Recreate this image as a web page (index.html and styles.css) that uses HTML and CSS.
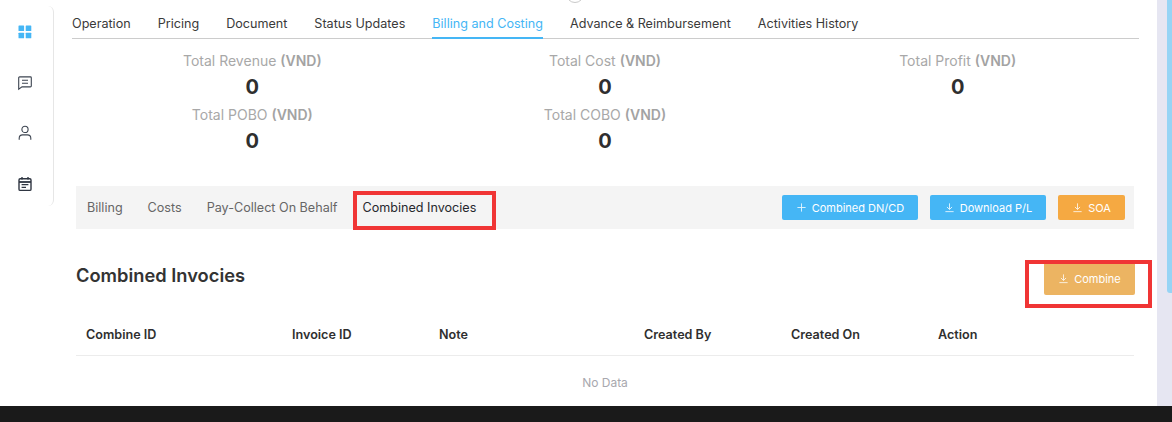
FILE: index.html
```html
<!DOCTYPE html>
<html lang="en">
<head>
<meta charset="utf-8">
<title>Billing and Costing</title>
<link rel="stylesheet" href="styles.css">
</head>
<body>
<div class="window">
  <div class="app">
    <aside class="sidebar">
      <svg class="side-icon" width="16" height="16" viewBox="0 0 16 16"><g fill="#45b6f5"><rect x="1.5" y="1.5" width="5.6" height="5.6" rx=".6"/><rect x="8.7" y="1.5" width="5.6" height="5.6" rx=".6"/><rect x="1.5" y="8.7" width="5.6" height="5.6" rx=".6"/><rect x="8.7" y="8.7" width="5.6" height="5.6" rx=".6"/></g></svg>
      <svg class="side-icon" width="16" height="16" viewBox="0 0 16 16" fill="none" stroke="#3c4450" stroke-width="1.1"><path d="M2.6 1.9h10.8a.9.9 0 0 1 .9.9v8.2a.9.9 0 0 1-.9.9H5l-3.3 2.2V2.8a.9.9 0 0 1 .9-.9z"/><path d="M5 5.3h6M5 8.3h6"/></svg>
      <svg class="side-icon" width="16" height="16" viewBox="0 0 16 16" fill="none" stroke="#3c4450" stroke-width="1.1"><circle cx="8" cy="4.4" r="3.1"/><path d="M2.2 14.8v-1.6c0-2 1.6-3.3 3.4-3.3h4.8c1.8 0 3.4 1.3 3.4 3.3v1.6"/></svg>
      <svg class="side-icon" width="16" height="16" viewBox="0 0 16 16" fill="none" stroke="#2f3642" stroke-width="1.4"><rect x="2" y="2.8" width="12" height="11.6" rx="1.2"/><path d="M2 6h12" stroke-width="1.8"/><path d="M5 1v2.6M11 1v2.6" /><path d="M4.6 8.7h6.8M4.6 11.3h4.4" stroke-width="1.2"/></svg>
    </aside>
    <main class="content">
      <span class="top-arc"></span>
      <nav class="tabs">
        <a class="tab">Operation</a>
        <a class="tab">Pricing</a>
        <a class="tab">Document</a>
        <a class="tab">Status Updates</a>
        <a class="tab tab-active">Billing and Costing</a>
        <a class="tab">Advance &amp; Reimbursement</a>
        <a class="tab">Activities History</a>
      </nav>
      <div class="body">
        <section class="stats">
          <div class="stat"><div class="stat-label">Total Revenue <b>(VND)</b></div><div class="stat-value">0</div></div>
          <div class="stat"><div class="stat-label">Total Cost <b>(VND)</b></div><div class="stat-value">0</div></div>
          <div class="stat"><div class="stat-label">Total Profit <b>(VND)</b></div><div class="stat-value">0</div></div>
          <div class="stat"><div class="stat-label">Total POBO <b>(VND)</b></div><div class="stat-value">0</div></div>
          <div class="stat"><div class="stat-label">Total COBO <b>(VND)</b></div><div class="stat-value">0</div></div>
        </section>
        <section class="subbar">
          <div class="subtabs">
            <a class="subtab">Billing</a>
            <a class="subtab">Costs</a>
            <a class="subtab">Pay-Collect On Behalf</a>
            <a class="subtab subtab-active">Combined Invocies</a>
          </div>
          <div class="actions">
            <button class="btn btn-blue btn-dn"><svg class="btn-icon" viewBox="0 0 12 12" fill="none" stroke="currentColor" stroke-width="1"><path d="M6 1.5v9M1.5 6h9"/></svg>Combined DN/CD</button>
            <button class="btn btn-blue btn-pl"><svg class="btn-icon" viewBox="0 0 12 12" fill="none" stroke="currentColor" stroke-width="1"><path d="M6 1.5v6.5M3.2 5.4L6 8.2l2.8-2.8M1.5 10.5h9"/></svg>Download P/L</button>
            <button class="btn btn-orange btn-soa"><svg class="btn-icon" viewBox="0 0 12 12" fill="none" stroke="currentColor" stroke-width="1"><path d="M6 1.5v6.5M3.2 5.4L6 8.2l2.8-2.8M1.5 10.5h9"/></svg>SOA</button>
          </div>
        </section>
        <section class="heading-row">
          <h2 class="heading">Combined Invocies</h2>
          <button class="btn btn-combine"><svg class="btn-icon" viewBox="0 0 12 12" fill="none" stroke="currentColor" stroke-width="1"><path d="M6 1.5v6.5M3.2 5.4L6 8.2l2.8-2.8M1.5 10.5h9"/></svg>Combine</button>
        </section>
        <section class="table">
          <div class="thead">
            <div>Combine ID</div><div>Invoice ID</div><div>Note</div><div>Created By</div><div>Created On</div><div>Action</div>
          </div>
          <div class="empty">No Data</div>
        </section>
      </div>
      <span class="mark mark-tab"></span>
      <span class="mark mark-btn"></span>
    </main>
    <div class="scrollbar"><div class="thumb"></div></div>
  </div>
  <div class="dock"></div>
</div>
</body>
</html>
```
FILE: styles.css
```css
* { box-sizing: border-box; }
html, body { margin: 0; height: 100%; overflow: hidden; background: #fff; }
body { font-family: Inter, "Liberation Sans", sans-serif; color: #333; }
.window { width: 1172px; height: 422px; display: flex; flex-direction: column; }
.app { height: 406px; display: flex; }
.dock { height: 16px; background: #1a1a1a; }

.sidebar {
  width: 54px; height: 200px; margin-top: 6px;
  border-right: 1px solid #e6e6e6; border-bottom-right-radius: 6px; border-top-right-radius: 6px;
  display: flex; flex-direction: column; align-items: center; gap: 34.5px;
  padding: 18px 4px 0 0; flex: none;
}
.side-icon { display: block; flex: none; }

.content { position: relative; flex: 1; padding: 0 18px; min-width: 0; }
.top-arc {
  position: absolute; left: 512px; top: -15px; width: 18px; height: 18px;
  border: 1px solid #c9c9c9; border-radius: 50%;
}
.tabs {
  display: flex; align-items: flex-end; gap: 27px; height: 39px;
  border-bottom: 1px solid #ccc; font-size: 12.6px;
}
.tab { color: #3a3a3a; height: 29px; line-height: 29px; }
.tab-active { color: #45b6f5; border-bottom: 2px solid #45b6f5; height: 30px; margin-bottom: -1px; }

.body { padding: 0 5px 0 4px; }
.stats { display: grid; grid-template-columns: repeat(3, 1fr); padding-top: 12px; }
.stat { text-align: center; height: 53.5px; }
.stat-label { font-size: 14px; line-height: 20px; color: #a8a8a8; }
.stat-label b { font-weight: 600; color: #a3a3a3; }
.stat-value { font-size: 20px; line-height: 32px; font-weight: 700; color: #2f2f2f; }

.subbar {
  height: 43px; margin-top: 28px; background: #f4f4f4;
  display: flex; justify-content: space-between; align-items: center; padding: 0 9px 0 11px;
}
.subtabs { display: flex; gap: 25px; font-size: 12.6px; }
.subtab { color: #666; }
.subtab-active { color: #26282e; }
.actions { display: flex; gap: 12px; }
.btn {
  height: 25px; border: 0; border-radius: 2px; color: #fff; font: inherit; font-size: 11px;
  display: inline-flex; align-items: center; justify-content: center; gap: 5px; padding: 0;
}
.btn-icon { width: 11px; height: 11px; flex: none; opacity: .85; }
.btn-blue { background: #45b6f5; }
.btn-orange { background: #f5a942; }
.btn-dn { width: 136px; }
.btn-pl { width: 116px; }
.btn-soa { width: 67px; }

.heading-row { height: 66px; display: flex; justify-content: space-between; align-items: flex-start; }
.heading { margin: 35px 0 0; font-size: 18.3px; line-height: 22px; font-weight: 600; color: #333; }
.btn-combine { width: 91px; height: 33px; margin: 33px -1px 0 0; background: #ecb462; }

.table { margin-top: 26px; }
.thead {
  display: grid; grid-template-columns: 206px 147px 205px 147px 147px 1fr;
  height: 35px; padding: 4px 0 0 10px; border-bottom: 1px solid #ececec;
  font-size: 12.6px; font-weight: 600; line-height: 20px; color: #2f2f2f;
}
.empty { text-align: center; font-size: 12px; line-height: 18px; color: #a8a8ae; padding-top: 18px; }

.mark { position: absolute; border: 4px solid #f03535; pointer-events: none; }
.mark-tab { left: 299px; top: 191px; width: 143px; height: 39px; }
.mark-btn { left: 971px; top: 260px; width: 127px; height: 48px; }

.scrollbar { width: 15px; flex: none; background: #e6e6f2; padding-left: 10px; }
.thumb { width: 5px; height: 293px; background: #96d4f5; border-bottom-left-radius: 3px; }
```
